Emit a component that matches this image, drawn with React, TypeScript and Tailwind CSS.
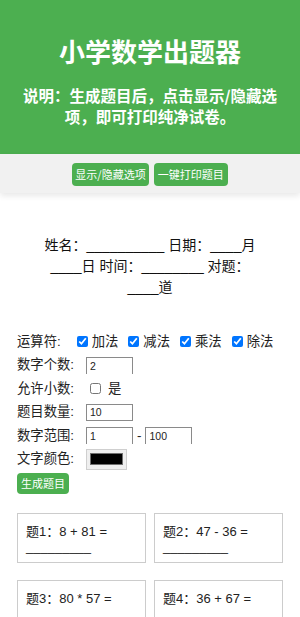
import React from "react";

const questions = [
  "8 + 81 =",
  "47 - 36 =",
  "80 * 57 =",
  "36 + 67 =",
  "12 + 45 =",
  "90 - 23 =",
  "6 * 14 =",
  "72 / 8 =",
  "55 + 19 =",
  "64 - 28 =",
];

function Row({ label, children }: { label: string; children: React.ReactNode }) {
  return (
    <div className="flex h-[23.5px] items-center">
      <span className="mr-[12px] text-[13.33px] leading-[16px] text-[#222]">{label}</span>
      {children}
    </div>
  );
}

function Check({ label, checked }: { label: string; checked: boolean }) {
  return (
    <label className="flex items-center">
      <input type="checkbox" defaultChecked={checked} className="m-0 h-[11px] w-[11px]" />
      <span className="ml-[4px] text-[13.33px] leading-[16px] text-[#222]">{label}</span>
    </label>
  );
}

export default function App() {
  return (
    <div className="h-screen overflow-hidden bg-white font-['Liberation_Sans','Noto_Sans_CJK_SC',sans-serif] text-[#222]">
      <header className="bg-[#4caf50] px-5 pb-[27px] pt-[34px] text-center text-white">
        <h1 className="font-['Noto_Sans_CJK_SC',sans-serif] text-[26px] font-bold leading-[34px]">小学数学出题器</h1>
        <p className="mt-[17px] font-['Noto_Sans_CJK_SC',sans-serif] text-[15.5px] font-bold leading-[21px]">
          说明：生成题目后，点击显示/隐藏选项，即可打印纯净试卷。
        </p>
      </header>

      <div className="relative flex justify-center gap-[5px] bg-[#f1f1f1] pb-[7px] pt-[9px] shadow-[0_3px_6px_rgba(0,0,0,0.09)]">
        <button className="h-[23px] rounded-[4px] bg-[#4caf50] px-[3px] font-['Noto_Sans_CJK_SC',sans-serif] text-[11px] leading-[15px] text-white">
          显示/隐藏选项
        </button>
        <button className="h-[23px] rounded-[4px] bg-[#4caf50] px-[4px] font-['Noto_Sans_CJK_SC',sans-serif] text-[11px] leading-[15px] text-white">
          一键打印题目
        </button>
      </div>

      <div className="mx-auto mt-[42px] w-[220px] text-center text-[14px] leading-[21px] text-[#111]">
        姓名：__________ 日期：____月____日 时间：________ 对题：____道
      </div>

      <div className="mt-[32px] px-[17px]">
        <Row label="运算符:">
          <div className="ml-[4px] flex items-center gap-[10px]">
            <Check label="加法" checked />
            <Check label="减法" checked />
            <Check label="乘法" checked />
            <Check label="除法" checked />
          </div>
        </Row>
        <Row label="数字个数:">
          <input
            defaultValue="2"
            className="h-[17px] w-[47px] border border-b-0 border-[#8a8a8a] pl-[3px] text-[10.5px] outline-none"
          />
        </Row>
        <Row label="允许小数:">
          <label className="ml-[4px] flex items-center">
            <input type="checkbox" className="m-0 h-[11px] w-[11px]" />
            <span className="ml-[7px] text-[13.33px] leading-[16px] text-[#222]">是</span>
          </label>
        </Row>
        <Row label="题目数量:">
          <input
            defaultValue="10"
            className="h-[17px] w-[47px] border border-[#8a8a8a] pl-[3px] text-[10.5px] outline-none"
          />
        </Row>
        <Row label="数字范围:">
          <div className="flex items-center">
            <input
              defaultValue="1"
              className="h-[17px] w-[47px] border border-b-0 border-[#8a8a8a] pl-[3px] text-[10.5px] outline-none"
            />
            <span className="mx-[4px] text-[13.33px] leading-[16px]">-</span>
            <input
              defaultValue="100"
              className="h-[17px] w-[47px] border border-b-0 border-[#8a8a8a] pl-[3px] text-[10.5px] outline-none"
            />
          </div>
        </Row>
        <Row label="文字颜色:">
          <div className="flex h-[21px] w-[41px] items-center justify-center border border-[#cfcfcf] bg-[#efefef]">
            <div className="h-[12px] w-[33px] border border-[#6f6f6f] bg-black" />
          </div>
        </Row>
        <button className="mt-[2px] h-[21px] rounded-[4px] bg-[#4caf50] px-[4px] font-['Noto_Sans_CJK_SC',sans-serif] text-[11px] leading-[15px] text-white">
          生成题目
        </button>

        <div className="mt-[18px] grid grid-cols-2 gap-x-[8px] gap-y-[17px]">
          {questions.map((q, i) => (
            <div key={i} className="border border-[#cccccc] px-[8px] pb-[8px] pt-[10px] text-[13px] leading-[15px] text-[#222]">
              题{i + 1}：{q} _________
            </div>
          ))}
        </div>
      </div>
    </div>
  );
}
